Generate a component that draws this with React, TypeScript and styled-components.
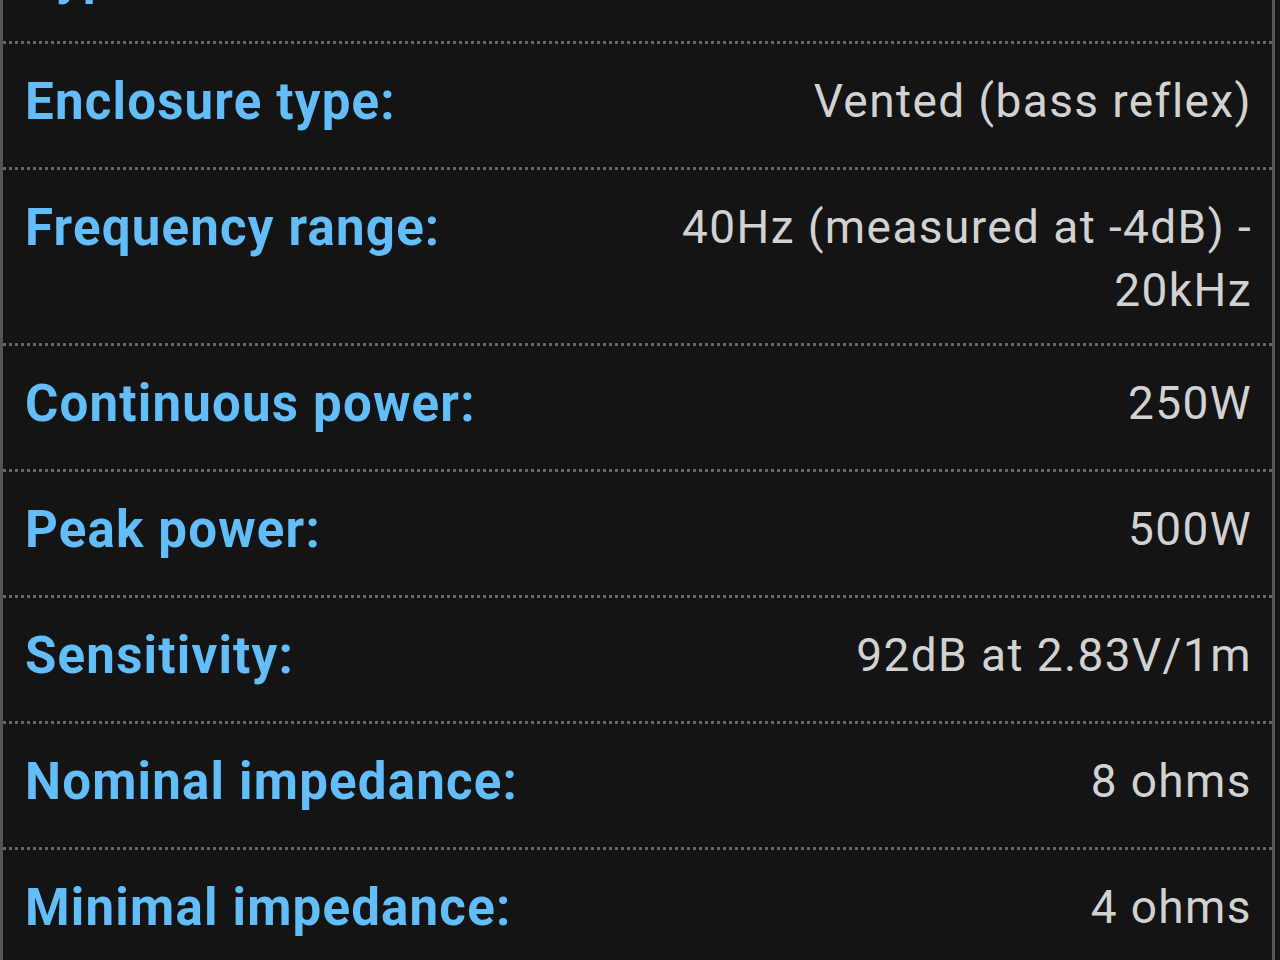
import React from "react";
import styled, { createGlobalStyle } from "styled-components";

const GlobalStyle = createGlobalStyle`
  html, body {
    margin: 0;
    padding: 0;
    background: #141414;
  }
  body {
    font-family: "Roboto", "Liberation Sans", sans-serif;
    overflow: hidden;
  }
`;

const Page = styled.div`
  width: 1280px;
  height: 960px;
  overflow: hidden;
  background: #141414;
`;

const SpecList = styled.div`
  width: 1275px;
  box-sizing: border-box;
  margin-top: -85px;
  border-left: 3px solid #555555;
  border-right: 3px solid #555555;
  background: #141414;
`;

const SpecRow = styled.div`
  display: grid;
  grid-template-columns: 1fr 1fr;
  align-items: start;
  padding: 26px 20px 21px 22px;
  border-top: 3px dotted #666666;

  &:first-child {
    border-top: none;
    padding-top: 29px;
  }
`;

const Label = styled.div`
  font-weight: 700;
  font-size: 51px;
  line-height: 64px;
  margin-bottom: 12px;
  color: #62bdf8;
  letter-spacing: 1.2px;
  white-space: nowrap;
`;

const Value = styled.div`
  font-weight: 400;
  font-size: 46px;
  line-height: 63px;
  color: #d2d2d2;
  text-align: right;
  letter-spacing: 1.4px;
`;

type Spec = {
  label: string;
  value: string;
};

const specs: Spec[] = [
  { label: "Type:", value: "Passive" },
  { label: "Enclosure type:", value: "Vented (bass reflex)" },
  { label: "Frequency range:", value: "40Hz (measured at -4dB) - 20kHz" },
  { label: "Continuous power:", value: "250W" },
  { label: "Peak power:", value: "500W" },
  { label: "Sensitivity:", value: "92dB at 2.83V/1m" },
  { label: "Nominal impedance:", value: "8 ohms" },
  { label: "Minimal impedance:", value: "4 ohms" },
];

const App: React.FC = () => {
  return (
    <Page>
      <GlobalStyle />
      <SpecList>
        {specs.map((spec) => (
          <SpecRow key={spec.label}>
            <Label>{spec.label}</Label>
            <Value>{spec.value}</Value>
          </SpecRow>
        ))}
      </SpecList>
    </Page>
  );
};

export default App;
